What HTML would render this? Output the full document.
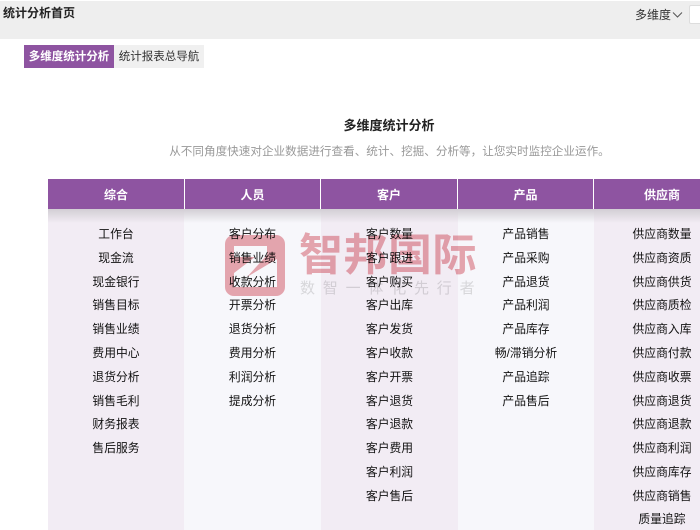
<!DOCTYPE html>
<html><head><meta charset="utf-8">
<style>
*{margin:0;padding:0;box-sizing:border-box}
html,body{width:700px;height:530px;overflow:hidden;background:#fff}
body{position:relative;font-family:"Liberation Sans","Noto Sans CJK SC",sans-serif;font-size:12px;color:#222}
.a{position:absolute;white-space:nowrap}
.top{left:0;top:1px;width:700px;height:38px;background:#eee}
.h{top:179px;height:30px;background:#8e54a1;color:#fff;font-weight:bold;text-align:center;line-height:32px}
.c{top:209px;height:321px;text-align:center;padding-top:14.2px;font-size:11.8px;color:#111}
.c div{height:23.78px;line-height:23.78px}
.p{background:#f2ecf4}.l{background:#f7f7fb}
.sh{left:48px;top:209px;width:652px;height:14px;background:linear-gradient(#d2ced4,rgba(225,222,228,0))}
.w{mix-blend-mode:multiply}
</style></head><body>
<div class="a top"></div>
<div class="a" style="left:3px;top:4px;font-size:12px;font-weight:bold;line-height:18px;color:#222">统计分析首页</div>
<div class="a" style="left:635px;top:6px;line-height:18px;color:#333;font-size:12px">多维度</div>
<svg class="a" style="left:672px;top:11px" width="11" height="8" viewBox="0 0 11 8"><path d="M1 1.5L5.5 6L10 1.5" fill="none" stroke="#555" stroke-width="1"/></svg>
<div class="a" style="left:689px;top:5px;width:14px;height:19px;background:#fff;border:1px solid #ddd;border-radius:2px"></div>
<div class="a" style="left:24px;top:45px;width:90px;height:23px;background:#8e54a1;color:#fff;font-weight:bold;text-align:center;line-height:24px;font-size:11.5px">多维度统计分析</div>
<div class="a" style="left:114px;top:45px;width:90px;height:23px;background:#f0f0f0;color:#333;text-align:center;line-height:24px;font-size:11.5px">统计报表总导航</div>
<div class="a" style="left:0;width:778px;top:117px;text-align:center;font-size:13px;font-weight:bold;line-height:18px;color:#222">多维度统计分析</div>
<div class="a" style="left:0;width:779px;top:143px;text-align:center;font-size:11.6px;line-height:18px;color:#999">从不同角度快速对企业数据进行查看、统计、挖掘、分析等，让您实时监控企业运作。</div>

<div class="a c p" style="left:48px;width:136px"><div>工作台</div><div>现金流</div><div>现金银行</div><div>销售目标</div><div>销售业绩</div><div>费用中心</div><div>退货分析</div><div>销售毛利</div><div>财务报表</div><div>售后服务</div></div>
<div class="a c l" style="left:184px;width:137px"><div>客户分布</div><div>销售业绩</div><div>收款分析</div><div>开票分析</div><div>退货分析</div><div>费用分析</div><div>利润分析</div><div>提成分析</div></div>
<div class="a c p" style="left:321px;width:137px"><div>客户数量</div><div>客户跟进</div><div>客户购买</div><div>客户出库</div><div>客户发货</div><div>客户收款</div><div>客户开票</div><div>客户退货</div><div>客户退款</div><div>客户费用</div><div>客户利润</div><div>客户售后</div></div>
<div class="a c l" style="left:458px;width:136px"><div>产品销售</div><div>产品采购</div><div>产品退货</div><div>产品利润</div><div>产品库存</div><div>畅/滞销分析</div><div>产品追踪</div><div>产品售后</div></div>
<div class="a c p" style="left:594px;width:136px"><div>供应商数量</div><div>供应商资质</div><div>供应商供货</div><div>供应商质检</div><div>供应商入库</div><div>供应商付款</div><div>供应商收票</div><div>供应商退货</div><div>供应商退款</div><div>供应商利润</div><div>供应商库存</div><div>供应商销售</div><div>质量追踪</div></div>
<div class="a sh"></div>

<div class="a h" style="left:48px;width:136px">综合</div>
<div class="a h" style="left:185px;width:135px">人员</div>
<div class="a h" style="left:321px;width:136px">客户</div>
<div class="a h" style="left:458px;width:135px">产品</div>
<div class="a h" style="left:594px;width:136px">供应商</div>

<svg class="a w" style="left:225px;top:235px" width="60" height="61" viewBox="0 0 60 61"><path fill-rule="evenodd" d="M9 0H51A9 9 0 0 1 60 9V52A9 9 0 0 1 51 61H9A9 9 0 0 1 0 52V9A9 9 0 0 1 9 0ZM9 11H42V20L22 42L52 24V52H9V38L30 22H9Z" fill="#eba9b0"/></svg>
<div class="a w" style="left:299px;top:229px;font-size:44px;font-weight:bold;line-height:54px;letter-spacing:.5px;color:#eba9b0">智邦国际</div>
<div class="a w" style="left:300px;top:279px;font-size:15px;line-height:20px;letter-spacing:7.8px;color:#dedede">数智一体化先行者</div>
</body></html>
